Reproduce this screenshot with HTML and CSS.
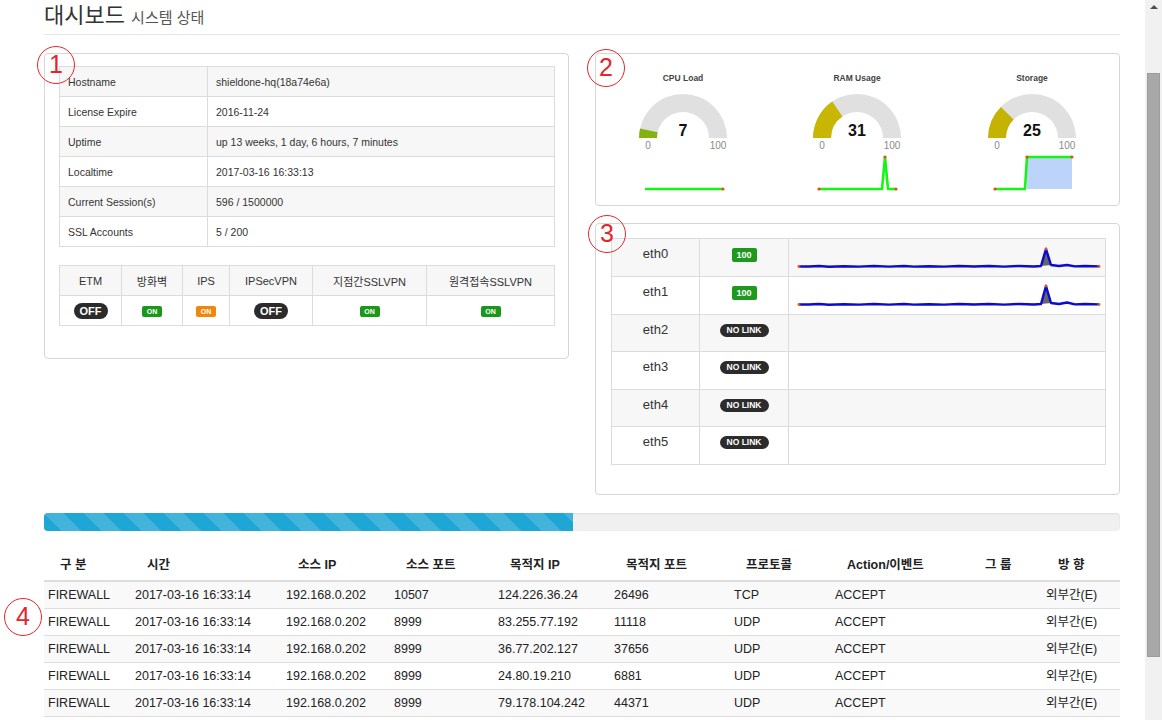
FILE: index.html
```html
<!DOCTYPE html>
<html lang="ko">
<head>
<meta charset="utf-8">
<title>대시보드</title>
<link rel="stylesheet" href="styles.css">
</head>
<body>
<div class="page">
  <header class="page-header">
    <h1>대시보드 <small>시스템 상태</small></h1>
  </header>

  <div class="panels">
    <section class="panel panel-info">
      <span class="mark mark-1">1</span>
      <table class="tbl info">
        <tr><td class="k">Hostname</td><td>shieldone-hq(18a74e6a)</td></tr>
        <tr><td class="k">License Expire</td><td>2016-11-24</td></tr>
        <tr><td class="k">Uptime</td><td>up 13 weeks, 1 day, 6 hours, 7 minutes</td></tr>
        <tr><td class="k">Localtime</td><td>2017-03-16 16:33:13</td></tr>
        <tr><td class="k">Current Session(s)</td><td>596 / 1500000</td></tr>
        <tr><td class="k">SSL Accounts</td><td>5 / 200</td></tr>
      </table>
      <table class="tbl services">
        <colgroup>
          <col class="c-etm"><col class="c-fw"><col class="c-ips"><col class="c-ipsec"><col class="c-s2s"><col class="c-remote">
        </colgroup>
        <tr class="head"><td>ETM</td><td>방화벽</td><td>IPS</td><td>IPSecVPN</td><td>지점간SSLVPN</td><td>원격접속SSLVPN</td></tr>
        <tr>
          <td><span class="pill-off">OFF</span></td>
          <td><span class="tag-on">ON</span></td>
          <td><span class="tag-on warn">ON</span></td>
          <td><span class="pill-off">OFF</span></td>
          <td><span class="tag-on">ON</span></td>
          <td><span class="tag-on">ON</span></td>
        </tr>
      </table>
    </section>

    <div class="right-col">
      <section class="panel panel-gauges">
        <span class="mark mark-2">2</span>
        <div class="gauge">
          <svg viewBox="0 0 174 151" width="174" height="151">
            <text class="g-title" x="87" y="27">CPU Load</text>
            <path class="g-bg" d="M43 84 A44 44 0 0 1 131 84 L113 84 A26 26 0 0 0 61 84 Z"/>
            <path fill="#86b20f" d="M43 84 A44 44 0 0 1 44.06 74.4 L61.63 78.33 A26 26 0 0 0 61 84 Z"/>
            <text class="g-val" x="87" y="82">7</text>
            <text class="g-lbl" x="52" y="95">0</text>
            <text class="g-lbl" x="122" y="95">100</text>
            <polyline class="spark" points="49,135 127,135"/>
            <circle class="dot" cx="127" cy="135" r="1.6"/>
          </svg>
        </div>
        <div class="gauge">
          <svg viewBox="0 0 174 151" width="174" height="151">
            <text class="g-title" x="87" y="27">RAM Usage</text>
            <path class="g-bg" d="M43 84 A44 44 0 0 1 131 84 L113 84 A26 26 0 0 0 61 84 Z"/>
            <path fill="#c8b602" d="M43 84 A44 44 0 0 1 62.27 47.61 L72.39 62.5 A26 26 0 0 0 61 84 Z"/>
            <text class="g-val" x="87" y="82">31</text>
            <text class="g-lbl" x="52" y="95">0</text>
            <text class="g-lbl" x="122" y="95">100</text>
            <polyline class="spark" points="49,135 112,135 115,103 118,135 126,135"/>
            <circle class="dot" cx="49" cy="135" r="1.6"/>
            <circle class="dot" cx="115" cy="103" r="1.6"/>
            <circle class="dot" cx="126" cy="135" r="1.6"/>
          </svg>
        </div>
        <div class="gauge">
          <svg viewBox="0 0 174 151" width="174" height="151">
            <text class="g-title" x="87" y="27">Storage</text>
            <path class="g-bg" d="M43 84 A44 44 0 0 1 131 84 L113 84 A26 26 0 0 0 61 84 Z"/>
            <path fill="#c4b300" d="M43 84 A44 44 0 0 1 55.89 52.89 L68.62 65.62 A26 26 0 0 0 61 84 Z"/>
            <text class="g-val" x="87" y="82">25</text>
            <text class="g-lbl" x="52" y="95">0</text>
            <text class="g-lbl" x="122" y="95">100</text>
            <rect x="82" y="103" width="45" height="32" fill="#bcd3fa"/>
            <polyline class="spark" points="50,135 80,135 82,103 127,103"/>
            <circle class="dot" cx="50" cy="135" r="1.6"/>
            <circle class="dot" cx="82" cy="103" r="1.6"/>
            <circle class="dot" cx="127" cy="103" r="1.6"/>
          </svg>
        </div>
      </section>

      <section class="panel panel-eth">
        <span class="mark mark-3">3</span>
        <table class="tbl eth">
          <colgroup><col class="c-name"><col class="c-link"><col class="c-graph"></colgroup>
          <tr>
            <td class="name">eth0</td>
            <td class="link"><span class="speed">100</span></td>
            <td class="graph">
              <svg viewBox="0 0 318 37" width="318" height="37">
                <path d="M252 27 L257 10 L262 26 Z" fill="#666"/>
                <polyline class="traffic" points="10,27.5 20,27.5 30,27 40,27.8 55,27.2 70,27.6 85,27 100,27.6 115,27 125,27.6 140,27.2 155,27.6 170,27 185,27.5 200,27 215,27.6 230,27 245,27.5 252,27 257,10 262,26 270,27 278,26 286,27.4 296,27 310,27.4"/>
                <circle class="dot" cx="10" cy="27.5" r="1.4"/>
                <circle class="dot" cx="257" cy="10" r="1.4"/>
                <circle class="dot" cx="310" cy="27.4" r="1.4"/>
              </svg>
            </td>
          </tr>
          <tr>
            <td class="name">eth1</td>
            <td class="link"><span class="speed">100</span></td>
            <td class="graph">
              <svg viewBox="0 0 318 37" width="318" height="37">
                <path d="M252 27 L257 9 L262 26 Z" fill="#666"/>
                <polyline class="traffic" points="10,27.5 20,27.5 30,27 40,27.8 55,27.2 70,27.6 85,27 100,27.6 115,27 125,27.6 140,27.2 155,27.6 170,27 185,27.5 200,27 215,27.6 230,27 245,27.5 252,27 257,9 262,26 270,27 278,25.5 286,27.4 296,27 310,27.4"/>
                <circle class="dot" cx="10" cy="27.5" r="1.4"/>
                <circle class="dot" cx="257" cy="9" r="1.4"/>
                <circle class="dot" cx="310" cy="27.4" r="1.4"/>
              </svg>
            </td>
          </tr>
          <tr><td class="name">eth2</td><td class="link"><span class="nolink">NO LINK</span></td><td class="graph"></td></tr>
          <tr><td class="name">eth3</td><td class="link"><span class="nolink">NO LINK</span></td><td class="graph"></td></tr>
          <tr><td class="name">eth4</td><td class="link"><span class="nolink">NO LINK</span></td><td class="graph"></td></tr>
          <tr><td class="name">eth5</td><td class="link"><span class="nolink">NO LINK</span></td><td class="graph"></td></tr>
        </table>
      </section>
    </div>
  </div>

  <div class="progress"><div class="progress-bar" style="width:49.2%"></div></div>

  <div class="log-wrap">
    <span class="mark mark-4">4</span>
    <table class="log">
      <colgroup>
        <col class="l1"><col class="l2"><col class="l3"><col class="l4"><col class="l5"><col class="l6"><col class="l7"><col class="l8"><col class="l9"><col class="l10">
      </colgroup>
      <thead>
        <tr><th>구 분</th><th>시간</th><th>소스 IP</th><th>소스 포트</th><th>목적지 IP</th><th>목적지 포트</th><th>프로토콜</th><th>Action/이벤트</th><th>그 룹</th><th>방 향</th></tr>
      </thead>
      <tbody>
        <tr><td>FIREWALL</td><td>2017-03-16 16:33:14</td><td>192.168.0.202</td><td>10507</td><td>124.226.36.24</td><td>26496</td><td>TCP</td><td>ACCEPT</td><td></td><td>외부간(E)</td></tr>
        <tr><td>FIREWALL</td><td>2017-03-16 16:33:14</td><td>192.168.0.202</td><td>8999</td><td>83.255.77.192</td><td>11118</td><td>UDP</td><td>ACCEPT</td><td></td><td>외부간(E)</td></tr>
        <tr><td>FIREWALL</td><td>2017-03-16 16:33:14</td><td>192.168.0.202</td><td>8999</td><td>36.77.202.127</td><td>37656</td><td>UDP</td><td>ACCEPT</td><td></td><td>외부간(E)</td></tr>
        <tr><td>FIREWALL</td><td>2017-03-16 16:33:14</td><td>192.168.0.202</td><td>8999</td><td>24.80.19.210</td><td>6881</td><td>UDP</td><td>ACCEPT</td><td></td><td>외부간(E)</td></tr>
        <tr><td>FIREWALL</td><td>2017-03-16 16:33:14</td><td>192.168.0.202</td><td>8999</td><td>79.178.104.242</td><td>44371</td><td>UDP</td><td>ACCEPT</td><td></td><td>외부간(E)</td></tr>
      </tbody>
    </table>
  </div>
</div>

<div class="scrollbar">
  <span class="sb-arrow"></span>
  <span class="sb-thumb"></span>
</div>
</body>
</html>
```

FILE: styles.css
```css
* { box-sizing: border-box; }

html, body {
  margin: 0;
  padding: 0;
  height: 720px;
  overflow: hidden;
  background: #fff;
}

body {
  display: flex;
  font-family: "Liberation Sans", "Noto Sans CJK KR", sans-serif;
  color: #333;
}

.page {
  flex: 1;
  min-width: 0;
  padding: 0 25px 0 44px;
}

/* header */
.page-header {
  height: 35px;
  border-bottom: 1px solid #e6e6e6;
}
.page-header h1 {
  margin: 0;
  padding-top: 1px;
  font-size: 22px;
  line-height: 30px;
  font-weight: normal;
  color: #333;
}
.page-header small {
  font-size: 15px;
  color: #555;
}

/* panels */
.panels {
  display: grid;
  grid-template-columns: 525px 525px;
  column-gap: 26px;
  margin-top: 18px;
  align-items: start;
}
.panel {
  position: relative;
  border: 1px solid #d6d6d6;
  border-radius: 4px;
  background: #fff;
}
.right-col {
  display: flex;
  flex-direction: column;
  gap: 17px;
}

.mark {
  position: absolute;
  width: 38px;
  height: 38px;
  border: 1.5px solid #e3262b;
  border-radius: 50%;
  color: #e3262b;
  font-size: 25px;
  line-height: 35px;
  text-align: center;
  background: transparent;
}
.mark-1 { left: -8px; top: -8px; }
.mark-2 { left: -9px; top: -5px; }
.mark-3 { left: -8px; top: -9px; }
.mark-4 { left: -40px; top: 51px; }

/* tables */
.tbl {
  border-collapse: collapse;
  width: 100%;
  table-layout: fixed;
}
.tbl td {
  border: 1px solid #dcdcdc;
}

.panel-info {
  height: 306px;
  padding: 12px 13px 0 14px;
}
.info td {
  height: 30px;
  padding: 0 8px;
  font-size: 10.5px;
  color: #333;
}
.info tr:nth-child(odd) td { background: #f7f7f7; }
.info td.k { width: 148px; }

.services { margin-top: 18px; }
.services td {
  height: 30px;
  text-align: center;
  font-size: 11px;
  padding: 0 2px;
}
.services .head td { background: #f7f7f7; }
.c-etm { width: 62px; }
.c-fw { width: 61px; }
.c-ips { width: 47px; }
.c-ipsec { width: 83px; }
.c-s2s { width: 114px; }

.pill-off {
  display: inline-block;
  width: 34px;
  height: 16px;
  line-height: 16px;
  border-radius: 8px;
  background: #2b2b2b;
  color: #fff;
  font-weight: bold;
  font-size: 11px;
  vertical-align: middle;
}
.tag-on {
  display: inline-block;
  width: 20px;
  height: 11px;
  line-height: 11px;
  border-radius: 2px;
  background: #1b971b;
  color: #fff;
  font-weight: bold;
  font-size: 7px;
  vertical-align: middle;
}
.tag-on.warn { background: #ee870b; }

/* gauges */
.panel-gauges {
  height: 153px;
  display: grid;
  grid-template-columns: repeat(3, 1fr);
}
.gauge svg { display: block; }
.g-title {
  font-size: 8.5px;
  font-weight: bold;
  fill: #444;
  text-anchor: middle;
}
.g-bg { fill: #e0e0e0; }
.g-val {
  font-size: 16px;
  font-weight: bold;
  fill: #111;
  text-anchor: middle;
}
.g-lbl {
  font-size: 10px;
  fill: #8a8a8a;
  text-anchor: middle;
}
.spark {
  fill: none;
  stroke: #14f514;
  stroke-width: 2.6;
  stroke-linejoin: round;
}
.dot { fill: #f04b16; }

/* eth */
.panel-eth {
  height: 272px;
  padding: 14px 13px 0 15px;
}
.eth tr { height: 37.4px; }
.eth td {
  vertical-align: top;
  padding: 6px 0 0;
  line-height: 18px;
  font-size: 13px;
  text-align: center;
}
.eth tr:nth-child(odd) td { background: #f7f7f7; }
.c-name { width: 88px; }
.c-link { width: 89px; }
.eth td.graph { padding: 0; text-align: left; }
.eth td.graph svg { display: block; }
.traffic {
  fill: none;
  stroke: #0a0ad0;
  stroke-width: 2.4;
  stroke-linejoin: round;
}
.speed {
  display: inline-block;
  width: 25px;
  height: 14px;
  line-height: 14px;
  border-radius: 2px;
  background: #1e991e;
  color: #fff;
  font-weight: bold;
  font-size: 9px;
  vertical-align: middle;
}
.nolink {
  display: inline-block;
  width: 49px;
  height: 13px;
  line-height: 13px;
  border-radius: 7px;
  background: #2c2c2c;
  color: #fff;
  font-weight: bold;
  font-size: 8.5px;
  vertical-align: middle;
}

/* progress */
.progress {
  margin-top: 18px;
  height: 18px;
  border-radius: 4px;
  background: #f0f0f0;
  box-shadow: inset 0 1px 2px rgba(0,0,0,.08);
  overflow: hidden;
}
.progress-bar {
  height: 100%;
  background-color: #1ea6d4;
  background-image: linear-gradient(45deg, rgba(255,255,255,.16) 25%, transparent 25%, transparent 50%, rgba(255,255,255,.16) 50%, rgba(255,255,255,.16) 75%, transparent 75%, transparent);
  background-size: 40px 40px;
}

/* log table */
.log-wrap {
  position: relative;
  margin-top: 16px;
}
.log {
  width: 100%;
  border-collapse: collapse;
  table-layout: fixed;
  font-size: 12.5px;
  border-bottom: 1px solid #ddd;
}
.l1 { width: 87px; }
.l2 { width: 151px; }
.l3 { width: 108px; }
.l4 { width: 104px; }
.l5 { width: 116px; }
.l6 { width: 120px; }
.l7 { width: 101px; }
.l8 { width: 138px; }
.l9 { width: 73px; }
.log th {
  text-align: left;
  font-weight: bold;
  padding: 10px 4px 7px 16px;
  line-height: 16px;
  border-bottom: 2px solid #ddd;
  color: #222;
  white-space: nowrap;
}
.log td {
  padding: 6px 4px 6px;
  line-height: 14px;
  border-top: 1px solid #ddd;
  color: #222;
  white-space: nowrap;
}
.log tbody tr:nth-child(odd) td { background: #f9f9f9; }

/* fake scrollbar */
.scrollbar {
  width: 17px;
  flex: none;
  background: #f1f1f1;
  display: flex;
  flex-direction: column;
  align-items: center;
  padding-top: 5px;
}
.sb-arrow {
  width: 0;
  height: 0;
  border-left: 4px solid transparent;
  border-right: 4px solid transparent;
  border-bottom: 4px solid #505050;
}
.sb-thumb {
  margin-top: 64px;
  width: 13px;
  height: 584px;
  background: #a8a8a8;
  border: 1px solid #9c9c9c;
}
```
